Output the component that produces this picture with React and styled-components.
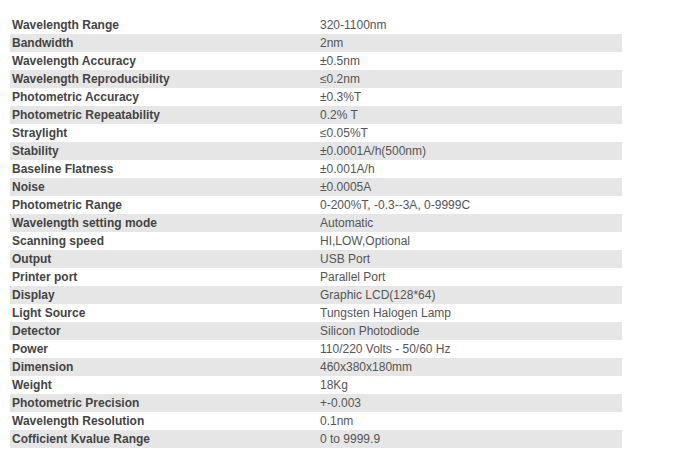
import React from "react"
import styled, { createGlobalStyle } from "styled-components"

const GlobalStyle = createGlobalStyle`
    body {
        margin: 0;
        background: #fff;
        font-family: "Liberation Sans", Arial, sans-serif;
    }
`

const specs = [
    ["Wavelength Range", "320-1100nm"],
    ["Bandwidth", "2nm"],
    ["Wavelength Accuracy", "±0.5nm"],
    ["Wavelength Reproducibility", "≤0.2nm"],
    ["Photometric Accuracy", "±0.3%T"],
    ["Photometric Repeatability", "0.2% T"],
    ["Straylight", "≤0.05%T"],
    ["Stability", "±0.0001A/h(500nm)"],
    ["Baseline Flatness", "±0.001A/h"],
    ["Noise", "±0.0005A"],
    ["Photometric Range", "0-200%T, -0.3--3A, 0-9999C"],
    ["Wavelength setting mode", "Automatic"],
    ["Scanning speed", "HI,LOW,Optional"],
    ["Output", "USB Port"],
    ["Printer port", "Parallel Port"],
    ["Display", "Graphic LCD(128*64)"],
    ["Light Source", "Tungsten Halogen Lamp"],
    ["Detector", "Silicon Photodiode"],
    ["Power", "110/220 Volts - 50/60 Hz"],
    ["Dimension", "460x380x180mm"],
    ["Weight", "18Kg"],
    ["Photometric Precision", "+-0.003"],
    ["Wavelength Resolution", "0.1nm"],
    ["Cofficient Kvalue Range", "0 to 9999.9"],
]

const Table = styled.div`
    margin: 16px 0 0 10px;
    width: 612px;
    display: flex;
    flex-direction: column;
`

const Row = styled.div`
    display: grid;
    grid-template-columns: 308px 1fr;
    height: 18px;
    align-items: center;
    background: ${p => (p.$shaded ? "#e6e6e6" : "#fff")};
    font-size: 12px;
`

const Label = styled.div`
    padding-left: 2px;
    font-weight: bold;
    color: #444;
`

const Value = styled.div`
    padding-left: 2px;
    color: #555;
`

const App = () => (
    <>
        <GlobalStyle />
        <Table>
            {specs.map(([label, value], i) => (
                <Row key={label} $shaded={i % 2 === 1}>
                    <Label>{label}</Label>
                    <Value>{value}</Value>
                </Row>
            ))}
        </Table>
    </>
)

export default App
